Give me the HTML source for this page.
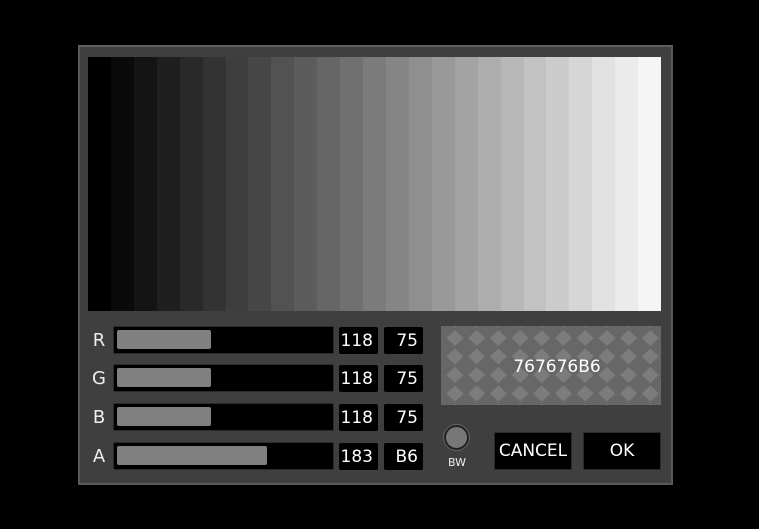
<!DOCTYPE html>
<html><head><style>
body{margin:0;width:759px;height:529px;background:#000;position:relative;overflow:hidden;font-family:"DejaVu Sans","Liberation Sans",sans-serif;color:#fff}
.dlg{position:absolute;left:78px;top:45px;width:591px;height:436px;background:#3f3f3f;border:2px solid #595959;border-top-color:#5e5e5e}
.grad{position:absolute;left:88px;top:57px;width:573px;height:254px;display:flex}
.grad div{flex:1}
.lab{position:absolute;left:88px;width:22px;text-align:center;font-size:18px;color:#eee}
.track{position:absolute;left:113px;width:219px;height:26px;background:#000;border:1px solid #2a2a2a;border-radius:2px}
.fill{position:absolute;left:3px;top:3px;height:19px;background:#808080;border-radius:2px}
.box{position:absolute;height:27px;background:#000;font-size:17px;line-height:28px;text-align:right;padding-right:5px;box-sizing:border-box;border-radius:2px}
.btn{position:absolute;top:432px;height:38px;background:#000;border:1px solid #2a2a2a;box-sizing:border-box;font-size:17px;line-height:37px;text-align:center}
</style></head><body>
<div class="dlg"></div>
<div class="grad" id="g"></div>
<script>
var g=document.getElementById('g');for(var i=0;i<25;i++){var v=Math.round(i*245/24);var d=document.createElement('div');d.style.background='rgb('+v+','+v+','+v+')';g.appendChild(d);}
</script>
<div class="lab" style="top:330px">R</div>
<div class="lab" style="top:368px">G</div>
<div class="lab" style="top:407px">B</div>
<div class="lab" style="top:446px">A</div>
<div class="track" style="top:326px"><div class="fill" style="width:94px"></div></div>
<div class="track" style="top:364px"><div class="fill" style="width:94px"></div></div>
<div class="track" style="top:403px"><div class="fill" style="width:94px"></div></div>
<div class="track" style="top:442px"><div class="fill" style="width:150px"></div></div>
<div class="box" style="left:339px;width:39px;top:327px">118</div>
<div class="box" style="left:384px;width:39px;top:327px">75</div>
<div class="box" style="left:339px;width:39px;top:365px">118</div>
<div class="box" style="left:384px;width:39px;top:365px">75</div>
<div class="box" style="left:339px;width:39px;top:404px">118</div>
<div class="box" style="left:384px;width:39px;top:404px">75</div>
<div class="box" style="left:339px;width:39px;top:443px">183</div>
<div class="box" style="left:384px;width:39px;top:443px">B6</div>
<svg style="position:absolute;left:441px;top:326px" width="220" height="79">
<defs><pattern id="p" x="3" y="3" width="21.7" height="18.5" patternUnits="userSpaceOnUse"><polygon points="11,1 19.5,9 11,17 2.5,9" fill="#7c7c7c"/></pattern></defs>
<rect width="220" height="79" fill="#676767"/><rect width="220" height="79" fill="url(#p)"/>
<text x="116" y="46" text-anchor="middle" font-size="17" fill="#fff" font-family="DejaVu Sans,Liberation Sans,sans-serif">767676B6</text>
</svg>
<div style="position:absolute;left:444px;top:425px;width:21px;height:21px;border-radius:50%;background:#777;border:2px solid #222;box-shadow:0 0 0 1px #666"></div>
<div style="position:absolute;left:440px;top:456px;width:34px;text-align:center;font-size:11px;color:#eee">BW</div>
<div class="btn" style="left:494px;width:78px">CANCEL</div>
<div class="btn" style="left:583px;width:78px">OK</div>
</body></html>
